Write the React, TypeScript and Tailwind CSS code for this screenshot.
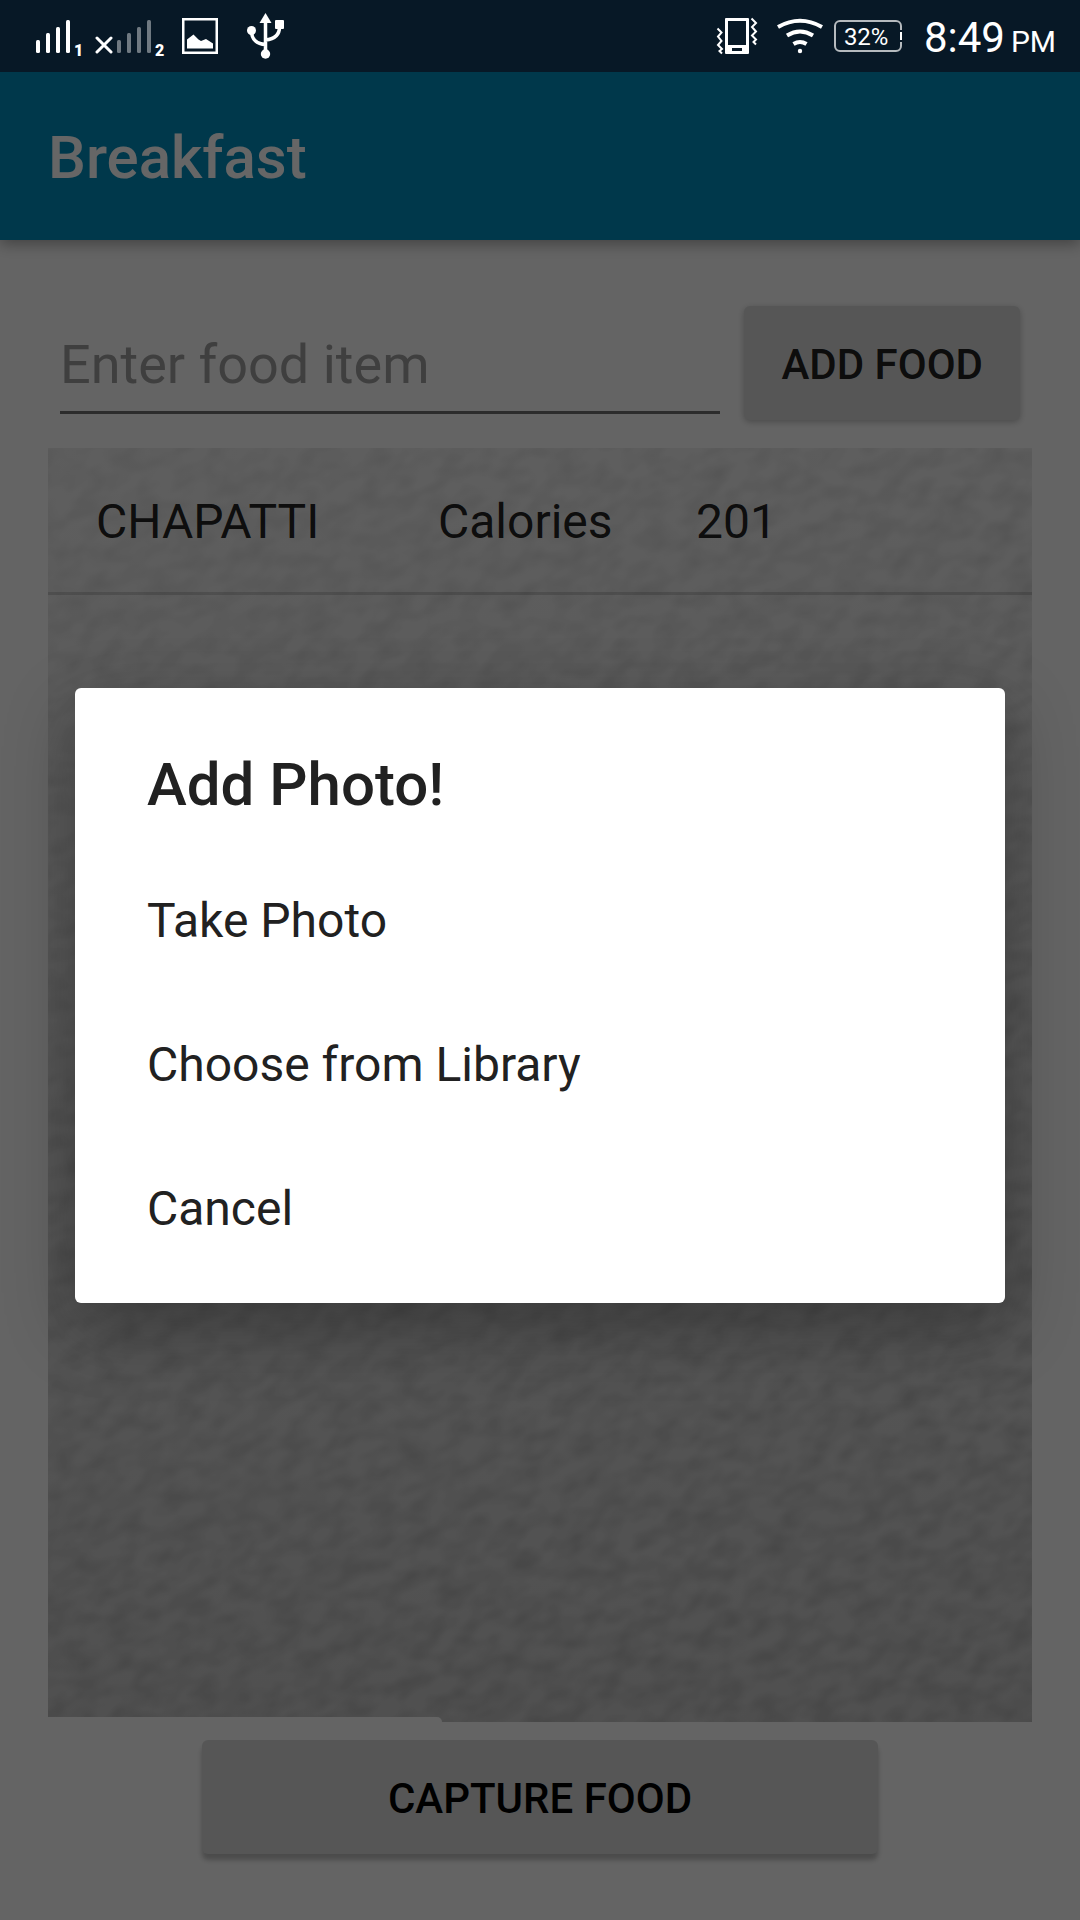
import React from "react";

const foods = [{ name: "CHAPATTI", label: "Calories", value: "201" }];
const actions = ["Take Photo", "Choose from Library", "Cancel"];

function SignalIcon({ sim, off }: { sim: string; off?: boolean }) {
  return (
    <svg
      viewBox={off ? "-22 0 70 72" : "0 0 48 72"}
      className={off ? "h-18 w-[70px]" : "h-18 w-12"}
      fill="#fff"
      aria-label={`SIM ${sim} signal`}
    >
      {off && (
        <path d="M-20 38 L-6 52 M-6 38 L-20 52" stroke="#fff" strokeWidth="3" strokeLinecap="round" />
      )}
      <g opacity={off ? 0.42 : 1}>
        <rect x="0" y="40" width="4" height="13" rx="1.5" />
        <rect x="10" y="33" width="4" height="20" rx="1.5" />
        <rect x="20" y="27" width="4" height="26" rx="1.5" />
        <rect x="30" y="20" width="4" height="33" rx="1.5" />
      </g>
      <text x="38" y="56" fontSize="16" fontWeight="900" fontFamily="Roboto, sans-serif">
        {sim}
      </text>
    </svg>
  );
}

function PictureIcon() {
  return (
    <svg viewBox="182 0 36 72" className="h-18 w-9" fill="#fff" aria-label="Picture">
      <path fillRule="evenodd" d="M182 18h36v36h-36z M184.500 20.500v31h31v-31z" />
      <path d="M187 48.500V39.500l6.500-5 5 5 2.500 1.500 5-2 7 4.500v5z" />
    </svg>
  );
}

function UsbIcon() {
  return (
    <svg viewBox="246 0 40 72" className="h-18 w-10" fill="#fff" aria-label="USB">
      <path d="M265.500 13l6 10h-12z" />
      <circle cx="265.500" cy="54" r="4.700" />
      <circle cx="251.500" cy="30.500" r="4.500" />
      <rect x="275" y="20" width="9" height="9" rx="1" />
      <path
        d="M265.500 20v34 M251.500 31c0 8 5 13 14 13.500 M279.500 27c0 7-4 12-14 13"
        fill="none"
        stroke="#fff"
        strokeWidth="3.500"
      />
    </svg>
  );
}

function VibrateIcon() {
  return (
    <svg viewBox="716 0 42 72" className="h-18 w-[42px]" fill="#fff" aria-label="Vibrate">
      <path fillRule="evenodd" d="M726 18h22a1 1 0 0 1 1 1v34a1 1 0 0 1-1 1h-22a1 1 0 0 1-1-1V19a1 1 0 0 1 1-1z M728 21v24h18V21z M732 48v3h10v-3z" />
      <path
        d="M717.500 28.500l4 4-3.500 4 3.500 4.500-3.500 4 4 4-2.500 2 2.500 2.500 M751.500 18.500l4.500 4.500-4 4 4 4.500-4 4 4 4-2.500 2.500 2.500 2.500"
        fill="none"
        stroke="#fff"
        strokeWidth="2"
      />
    </svg>
  );
}

function WifiIcon() {
  return (
    <svg viewBox="777 0 46 72" className="h-18 w-[46px]" fill="none" stroke="#fff" strokeWidth="4" aria-label="Wi-Fi">
      <path d="M778 27q22-12.500 44 0" />
      <path d="M787 35.500q13-8 26 0" />
      <path d="M793.500 44q6.500-4 13 0" />
      <circle cx="800" cy="51" r="2.200" fill="#fff" stroke="none" />
    </svg>
  );
}

function StatusBar() {
  return (
    <div className="relative z-20 flex h-18 items-center justify-between bg-[#071826] pl-9 pr-6 text-white">
      <div className="flex items-center">
        <SignalIcon sim="1" />
        <div className="ml-[11px]">
          <SignalIcon sim="2" off />
        </div>
        <div className="ml-[17px]">
          <PictureIcon />
        </div>
        <div className="ml-7">
          <UsbIcon />
        </div>
      </div>
      <div className="flex items-center">
        <VibrateIcon />
        <div className="ml-[19px]">
          <WifiIcon />
        </div>
        <div className="relative ml-[11px] flex h-8 w-[68px] items-center rounded-md border-2 border-[#b5babe] pl-2 pt-px text-2xl/8">
          32%
          <span className="absolute -right-0.5 top-2 h-3 w-0.5 border-y-2 border-[#071826] bg-white" />
        </div>
        <div className="ml-[22px] flex items-baseline gap-1.5 pt-[3px]">
          <span className="text-[42px]/[52px]">8:49</span>
          <span className="text-3xl">PM</span>
        </div>
      </div>
    </div>
  );
}

function PaperTexture() {
  return (
    <svg className="absolute inset-0 h-full w-full" aria-hidden="true">
      <defs>
        <filter id="grain" x="-5%" y="-5%" width="110%" height="110%" colorInterpolationFilters="sRGB">
          <feTurbulence type="fractalNoise" baseFrequency="0.038 0.064" numOctaves="2" seed="21" />
          <feColorMatrix values="0 0 0 0 0  0 0 0 0 0  0 0 0 0 0  1.600 0 0 0 -0.550" />
          <feGaussianBlur stdDeviation="1.500" />
        </filter>
        <linearGradient id="fade" x1="0" y1="0" x2="0.400" y2="1">
          <stop offset="0" stopColor="#888" />
          <stop offset="1" stopColor="#fff" />
        </linearGradient>
        <mask id="depth">
          <rect width="100%" height="100%" fill="url(#fade)" />
        </mask>
      </defs>
      <g mask="url(#depth)">
        <g transform="rotate(-25)">
          <rect x="-900" y="-100" width="2200" height="2000" filter="url(#grain)" opacity="0.150" />
        </g>
      </g>
    </svg>
  );
}

export default function App() {
  return (
    <div className="relative flex min-h-screen flex-col bg-[#fafafa] font-[Roboto,sans-serif]">
      <StatusBar />
      <header className="flex h-42 items-center bg-[#008cbb] px-12 pt-1 shadow-[0_4px_14px_rgba(0,0,0,0.35)]">
        <h1 className="text-6xl/[70px] font-medium text-white">Breakfast</h1>
      </header>
      <main className="flex flex-1 flex-col px-12 pb-[66px] pt-[66px]">
        <form className="flex items-start gap-6 px-3" onSubmit={(e) => e.preventDefault()}>
          <input
            type="text"
            aria-label="Food item"
            placeholder="Enter food item"
            className="h-27 min-w-0 flex-1 border-b-3 border-[#6e6e6e] pt-3 text-[54px] placeholder:text-[#9e9e9e]"
          />
          <button
            type="submit"
            className="h-[114px] rounded-md bg-[#d6d7d7] px-[37px] pt-0.5 text-[42px] font-medium text-black/87 shadow-[0_2px_6px_rgba(0,0,0,0.25)]"
          >
            ADD FOOD
          </button>
        </form>
        <section className="relative mt-7 flex flex-1 flex-col bg-linear-to-b from-[#ececec] to-[#c8c8c8]">
          <PaperTexture />
          <table className="relative w-full table-fixed text-5xl text-black/87">
            <tbody>
              {foods.map((food) => (
                <tr key={food.name} className="h-[145px] border-b-3 border-black/15">
                  <td className="w-[390px] pl-12 pt-1">{food.name}</td>
                  <td className="w-[258px] pt-1">{food.label}</td>
                  <td className="pt-1">{food.value}</td>
                </tr>
              ))}
            </tbody>
          </table>
          <div className="relative mt-auto h-[5px] w-2/5 rounded-tr-md bg-[#fafafa]" />
        </section>
        <button
          type="button"
          className="mt-[18px] h-[114px] w-[676px] max-w-full self-center rounded-md bg-[#d6d7d7] pt-0.5 text-[42px] font-medium text-black shadow-[0_6px_5px_rgba(0,0,0,0.25)]"
        >
          CAPTURE FOOD
        </button>
      </main>
      <div className="absolute inset-0 z-10 flex items-center justify-center bg-black/60 px-[75px] pt-[71px]">
        <div
          role="dialog"
          aria-modal="true"
          aria-labelledby="dialog-title"
          className="w-full rounded-md bg-white pb-[23px] pt-[62px] text-[#212121] shadow-[0_24px_70px_rgba(0,0,0,0.3)]"
        >
          <h2 id="dialog-title" className="px-18 pb-7 text-6xl/[70px] font-medium">
            Add Photo!
          </h2>
          <ul>
            {actions.map((action) => (
              <li key={action}>
                <button type="button" className="h-36 w-full px-18 pt-0.5 text-left text-5xl">
                  {action}
                </button>
              </li>
            ))}
          </ul>
        </div>
      </div>
    </div>
  );
}
